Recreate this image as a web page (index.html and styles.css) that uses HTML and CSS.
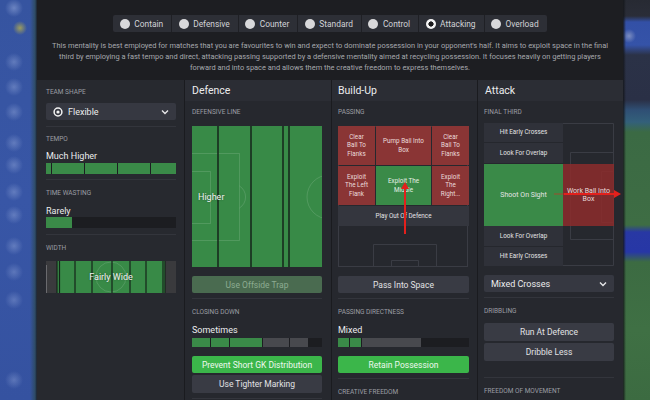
FILE: index.html
```html
<!DOCTYPE html>
<html lang="en">
<head>
<meta charset="utf-8">
<title>Tactics</title>
<link rel="stylesheet" href="styles.css">
</head>
<body>
<div class="screen">
  <div class="bg-left"></div>
  <main class="panel">
    <header class="top">
      <div class="mentality">
        <div class="ment"><span class="radio"></span>Contain</div>
        <div class="ment"><span class="radio"></span>Defensive</div>
        <div class="ment"><span class="radio"></span>Counter</div>
        <div class="ment"><span class="radio"></span>Standard</div>
        <div class="ment"><span class="radio"></span>Control</div>
        <div class="ment"><span class="radio on"></span>Attacking</div>
        <div class="ment"><span class="radio"></span>Overload</div>
      </div>
      <p class="desc">This mentality is best employed for matches that you are favourites to win and expect to dominate possession in your opponent's half. It aims to exploit space in the final<br>third by employing a fast tempo and direct, attacking passing supported by a defensive mentality aimed at recycling possession. It focuses heavily on getting players<br>forward and into space and allows them the creative freedom to express themselves.</p>
    </header>

    <div class="cols">
      <section class="col col-side">
        <div class="lbl lbl-top">Team Shape</div>
        <div class="dd">
          <svg class="dd-icon" width="10" height="10" viewBox="0 0 10 10"><circle cx="5" cy="5" r="3.9" fill="none" stroke="#f2f2f2" stroke-width="1.5"/><circle cx="5" cy="5" r="1.6" fill="#f2f2f2"/></svg>
          <span>Flexible</span>
          <svg class="chev" width="8" height="6" viewBox="0 0 8 6"><path d="M1 1.5 L4 4.5 L7 1.5" fill="none" stroke="#e6e6e8" stroke-width="1.4"/></svg>
        </div>
        <div class="sep sep-a"></div>
        <div class="lbl lbl-sm">Tempo</div>
        <div class="val">Much Higher</div>
        <div class="bar bar-tall bar-tempo">
          <span class="seg" style="width:5px"></span>
          <span class="seg" style="width:32px"></span>
          <span class="seg" style="width:32px"></span>
          <span class="seg" style="width:32px"></span>
          <span class="seg" style="width:25px"></span>
        </div>
        <div class="sep"></div>
        <div class="lbl lbl-lg">Time Wasting</div>
        <div class="val">Rarely</div>
        <div class="bar bar-tall bar-tw">
          <span class="seg" style="width:26px"></span>
        </div>
        <div class="sep sep-b"></div>
        <div class="lbl">Width</div>
        <div class="stack width-pitch">
          <svg width="130" height="32" viewBox="0 0 130 32">
            <rect x="0" y="0" width="130" height="32" fill="#3a3a3d"/>
            <rect x="11" y="0" width="108" height="32" fill="#388a47"/>
            <circle cx="65" cy="16" r="15" fill="none" stroke="rgba(255,255,255,0.13)" stroke-width="1"/>
            <g stroke="#15231a" stroke-width="1.2">
              <line x1="11" y1="0" x2="11" y2="32"/>
              <line x1="13.5" y1="0" x2="13.5" y2="32"/>
              <line x1="29" y1="0" x2="29" y2="32"/>
              <line x1="46" y1="0" x2="46" y2="32"/>
              <line x1="66" y1="0" x2="66" y2="32"/>
              <line x1="84" y1="0" x2="84" y2="32"/>
              <line x1="100" y1="0" x2="100" y2="32"/>
              <line x1="117" y1="0" x2="117" y2="32"/>
              <line x1="119" y1="0" x2="119" y2="32"/>
            </g>
            <line x1="0.5" y1="4" x2="0.5" y2="32" stroke="#6a6a6e" stroke-width="1"/>
          </svg>
          <span class="pitch-text center">Fairly Wide</span>
        </div>
      </section>

      <section class="col col-def">
        <h2 class="col-head">Defence</h2>
        <div class="col-body">
          <div class="lbl lbl-head">Defensive Line</div>
          <div class="stack def-pitch">
            <svg width="130" height="141" viewBox="0 0 130 141">
              <rect x="0" y="0" width="130" height="141" fill="#388a47"/>
              <g fill="none" stroke="rgba(255,255,255,0.13)" stroke-width="1">
                <path d="M0 27.5 H47.5 V114.5 H0"/>
                <path d="M0 45.5 H18.5 V97.5 H0"/>
                <path d="M47.5 60 A13 13 0 0 1 47.5 82"/>
                <circle cx="137" cy="71" r="22"/>
              </g>
              <g stroke="#15231a" stroke-width="1.5">
                <line x1="26" y1="0" x2="26" y2="141"/>
                <line x1="59" y1="0" x2="59" y2="141"/>
                <line x1="91" y1="0" x2="91" y2="141"/>
                <line x1="97" y1="0" x2="97" y2="141"/>
              </g>
            </svg>
            <span class="pitch-text left">Higher</span>
          </div>
          <div class="btn btn-off btn-gap">Use Offside Trap</div>
          <div class="sep"></div>
          <div class="lbl lbl-lg">Closing Down</div>
          <div class="val">Sometimes</div>
          <div class="bar">
            <span class="seg" style="width:18px"></span>
            <span class="seg" style="width:18px"></span>
            <span class="seg" style="width:32px"></span>
            <span class="seg seg-grey" style="width:26px"></span>
            <span class="seg seg-grey" style="width:18px"></span>
          </div>
          <div class="btn btn-green btn-gap">Prevent Short GK Distribution</div>
          <div class="btn btn-2">Use Tighter Marking</div>
          <div class="sep"></div>
        </div>
      </section>

      <section class="col col-build">
        <h2 class="col-head">Build-Up</h2>
        <div class="col-body">
          <div class="lbl lbl-head">Passing</div>
          <div class="stack build-pitch">
            <svg width="130" height="141" viewBox="0 0 130 141">
              <g fill="none" stroke="#3a3c44" stroke-width="1">
                <rect x="0.5" y="0.5" width="129" height="140"/>
                <path d="M35.5 141 V118.5 H98.5 V141"/>
                <path d="M53.5 141 V134.5 H80.5 V141"/>
              </g>
            </svg>
            <div class="pass-grid">
              <div class="cell red">Clear<br>Ball To<br>Flanks</div>
              <div class="cell red">Pump Ball Into<br>Box</div>
              <div class="cell red">Clear<br>Ball To<br>Flanks</div>
              <div class="cell red">Exploit<br>The Left<br>Flank</div>
              <div class="cell green">Exploit The<br>Middle</div>
              <div class="cell red">Exploit<br>The<br>Right...</div>
              <div class="cell grey wide">Play Out Of Defence</div>
            </div>
            <svg class="arrow" width="130" height="141" viewBox="0 0 130 141">
              <line x1="67" y1="108" x2="67" y2="62" stroke="#e3201c" stroke-width="2"/>
              <path d="M63 63 L67 56 L71 63 Z" fill="#e3201c"/>
            </svg>
          </div>
          <div class="btn btn-gap">Pass Into Space</div>
          <div class="sep"></div>
          <div class="lbl lbl-lg">Passing Directness</div>
          <div class="val">Mixed</div>
          <div class="bar">
            <span class="seg" style="width:11px"></span>
            <span class="seg" style="width:11px"></span>
            <span class="seg seg-grey" style="width:59px"></span>
          </div>
          <div class="btn btn-green btn-gap">Retain Possession</div>
          <div class="sep sep-c"></div>
          <div class="lbl lbl-lg">Creative Freedom</div>
        </div>
      </section>

      <section class="col col-att">
        <h2 class="col-head">Attack</h2>
        <div class="col-body">
          <div class="lbl lbl-head">Final Third</div>
          <div class="stack att-pitch">
            <svg width="130" height="143" viewBox="0 0 130 143">
              <g fill="none" stroke="#3a3c44" stroke-width="1">
                <path d="M79 0.5 H129.5 V142.5 H79"/>
                <path d="M130 29.5 H86.5 V116.5 H130"/>
                <path d="M130 48.5 H117.5 V99.5 H130"/>
              </g>
            </svg>
            <div class="att-grid">
              <div class="acell">Hit Early Crosses</div>
              <div class="acell">Look For Overlap</div>
              <div class="acell a-green">Shoot On Sight</div>
              <div class="acell a-red">Work Ball Into<br>Box</div>
              <div class="acell">Look For Overlap</div>
              <div class="acell">Hit Early Crosses</div>
            </div>
            <svg class="arrow" width="130" height="143" viewBox="0 0 130 143">
              <line x1="70" y1="71" x2="80" y2="71" stroke="#e3201c" stroke-width="1" opacity="0.6"/>
              <line x1="80" y1="71" x2="131" y2="71" stroke="#e3201c" stroke-width="2"/>
              <path d="M130 67 L137 71 L130 75 Z" fill="#e3201c"/>
            </svg>
          </div>
          <div class="dd dd-gap">
            <span>Mixed Crosses</span>
            <svg class="chev" width="8" height="6" viewBox="0 0 8 6"><path d="M1 1.5 L4 4.5 L7 1.5" fill="none" stroke="#e6e6e8" stroke-width="1.4"/></svg>
          </div>
          <div class="sep"></div>
          <div class="lbl">Dribbling</div>
          <div class="btn btn-tall">Run At Defence</div>
          <div class="btn btn-tall btn-2">Dribble Less</div>
          <div class="sep sep-d"></div>
          <div class="lbl lbl-lg">Freedom Of Movement</div>
        </div>
      </section>
    </div>
  </main>
  <div class="bg-right"></div>
</div>
</body>
</html>
```

FILE: styles.css
```css
* { box-sizing: border-box; margin: 0; padding: 0; }

html, body {
  width: 650px;
  height: 400px;
  overflow: hidden;
  background: #1d1e22;
}

body {
  font-family: Roboto, "Liberation Sans", sans-serif;
  color: #e6e6e8;
}

.screen {
  display: flex;
  width: 650px;
  height: 400px;
}

.bg-left {
  width: 37px;
  flex: none;
  background:
    linear-gradient(90deg, rgba(0,0,0,0) 0, rgba(0,0,0,0) 30px, rgba(40,70,55,0.55) 35px, rgba(25,30,35,0.9) 37px),
    radial-gradient(circle at 20px 28px, rgba(190,180,70,0.75) 0, rgba(190,180,70,0) 7px),
    radial-gradient(circle at 14px 8px, rgba(150,170,220,0.55) 0, rgba(150,170,220,0) 9px),
    radial-gradient(circle at 14px 62px, rgba(150,170,220,0.45) 0, rgba(150,170,220,0) 9px),
    radial-gradient(circle at 14px 87px, rgba(150,170,220,0.45) 0, rgba(150,170,220,0) 9px),
    radial-gradient(circle at 14px 112px, rgba(150,170,220,0.45) 0, rgba(150,170,220,0) 9px),
    radial-gradient(circle at 14px 143px, rgba(150,170,220,0.45) 0, rgba(150,170,220,0) 9px),
    radial-gradient(circle at 14px 165px, rgba(150,170,220,0.45) 0, rgba(150,170,220,0) 9px),
    radial-gradient(circle at 14px 192px, rgba(150,170,220,0.45) 0, rgba(150,170,220,0) 9px),
    radial-gradient(circle at 14px 215px, rgba(150,170,220,0.45) 0, rgba(150,170,220,0) 9px),
    radial-gradient(circle at 14px 246px, rgba(150,170,220,0.45) 0, rgba(150,170,220,0) 9px),
    radial-gradient(circle at 14px 272px, rgba(150,170,220,0.4) 0, rgba(150,170,220,0) 9px),
    radial-gradient(circle at 14px 300px, rgba(150,170,220,0.4) 0, rgba(150,170,220,0) 9px),
    radial-gradient(circle at 14px 380px, rgba(150,170,220,0.4) 0, rgba(150,170,220,0) 9px),
    linear-gradient(180deg, #3654a0 0, #3856a6 50%, #3552a0 100%);
}

.bg-right {
  flex: 1;
  background:
    linear-gradient(90deg, rgba(20,22,26,0.9) 0, rgba(20,22,26,0) 3px),
    radial-gradient(circle at 6px 36px, rgba(170,180,210,0.6) 0, rgba(170,180,210,0) 7px),
    linear-gradient(180deg,
      #272a33 0, #2a2d38 16px,
      #3350a6 22px, #3553a8 45px,
      #2b3247 55px, #2a3046 100px,
      #2f4f74 110px, #33607a 122px,
      #3b6a44 132px, #3e6d44 225px,
      #2838a4 232px, #2737a6 252px,
      #3c6b42 262px, #3f7044 330px, #3c6b41 400px);
}

.panel {
  width: 586px;
  height: 400px;
  flex: none;
  background: #1d1e22;
  display: flex;
  flex-direction: column;
  overflow: hidden;
}

/* ---------- top ---------- */
.top {
  height: 80px;
  flex: none;
  padding-top: 15px;
  display: flex;
  flex-direction: column;
  align-items: center;
}

.mentality {
  display: flex;
  height: 17px;
  background: #2d2f36;
  border-radius: 2px;
}

.ment {
  display: flex;
  align-items: center;
  gap: 4.5px;
  padding: 0 8px 0 6.5px;
  font-size: 8.4px;
  color: #d2d3d6;
  border-left: 1px solid #1f2025;
}

.ment:first-child { border-left: 0; }

.radio {
  width: 10px;
  height: 10px;
  border-radius: 50%;
  background: #d8d8da;
  flex: none;
}

.radio.on {
  background: radial-gradient(circle, #1b1b1d 0, #1b1b1d 2.3px, #f4f4f4 2.9px);
}

.desc {
  margin-top: 8px;
  font-size: 7.45px;
  line-height: 11px;
  color: #a6a8ad;
  text-align: center;
  white-space: nowrap;
}

/* ---------- columns ---------- */
.cols {
  flex: 1;
  min-height: 0;
  display: flex;
  gap: 1px;
  background: #1a1b1f;
  overflow: hidden;
}

.col {
  background: #26282e;
  display: flex;
  flex-direction: column;
}

.col-side {
  width: 147px;
  padding: 0 8px 0 9px;
  background: #27292f;
}

.col-def { width: 146px; }
.col-build { width: 145px; }
.col-att { width: 145px; }

.col-head {
  height: 21px;
  flex: none;
  background: #2b2d34;
  font-size: 10.5px;
  font-weight: 400;
  padding-left: 7px;
  display: flex;
  align-items: center;
  color: #ececee;
}

.col-build .col-head { padding-left: 6px; }

.col-body {
  padding: 0 9px 0 7px;
  display: flex;
  flex-direction: column;
}

.col-build .col-body { padding: 0 8px 0 6px; }
.col-att .col-body { padding: 0 9px 0 6px; }

/* ---------- labels / values ---------- */
.lbl {
  height: 25px;
  flex: none;
  display: flex;
  align-items: center;
  font-size: 6.5px;
  color: #9b9da3;
  text-transform: uppercase;
}

.lbl-top { height: 23px; }
.lbl-sm { height: 24px; }
.lbl-lg { height: 26px; }
.lbl-head { height: 22px; }

.val {
  height: 10px;
  flex: none;
  font-size: 9px;
  line-height: 10px;
  color: #ececee;
}

.sep {
  height: 1px;
  flex: none;
  background: #33353c;
  margin-top: 5px;
}

.sep-a { margin-top: 6px; }
.sep-b { margin-top: 6px; }
.sep-c { margin-top: 5px; }
.sep-d { margin-top: 16px; }

/* ---------- bars ---------- */
.bar {
  display: flex;
  flex: none;
  gap: 1px;
  height: 9px;
  margin-top: 3px;
  background: #1c1d21;
}

.bar-tall { height: 11px; }
.bar-tempo { margin-top: 2px; background: #3a8a48; }
.bar-tw { margin-top: 1px; }

.seg {
  background: #3a8a48;
  flex: none;
}

.bar-tempo .seg { box-shadow: 1px 0 0 #1c1d21; }
.bar-tempo .seg:last-child { box-shadow: none; }

.seg-grey { background: #48494e; }

/* ---------- buttons / dropdowns ---------- */
.btn {
  height: 17px;
  flex: none;
  border-radius: 2px;
  background: #393b44;
  font-size: 8.5px;
  display: flex;
  align-items: center;
  justify-content: center;
  color: #e2e2e5;
}

.btn-gap { margin-top: 9px; }
.btn-2 { margin-top: 2px; height: 18px; }
.btn-tall { height: 18px; }

.btn-green {
  background: #3bb64a;
  color: #eef8ee;
}

.btn-off {
  background: #4a6b50;
  color: #8dac92;
}

.dd {
  height: 17px;
  flex: none;
  border-radius: 2px;
  background: #363841;
  display: flex;
  align-items: center;
  gap: 5px;
  padding: 0 7px;
  font-size: 9px;
  color: #ececee;
}

.dd-gap { margin-top: 9px; }

.dd-icon { flex: none; }

.chev {
  margin-left: auto;
  flex: none;
}

/* ---------- pitches ---------- */
.stack {
  display: grid;
  flex: none;
}

.stack > * {
  grid-area: 1 / 1;
}

.stack svg { display: block; }

.width-pitch { margin-top: 1px; height: 32px; }
.def-pitch { margin-top: 3px; height: 141px; }
.build-pitch { margin-top: 3px; height: 141px; }
.att-pitch { margin-top: 0; height: 143px; }

.arrow { overflow: visible; }

.pitch-text {
  align-self: center;
  font-size: 9px;
  color: #f2f2f2;
  text-shadow: 0 0 2px rgba(0,0,0,0.4);
}

.pitch-text.center { justify-self: center; }
.pitch-text.left { justify-self: start; margin-left: 6px; }

.pass-grid {
  align-self: start;
  display: grid;
  grid-template-columns: 37px 55px 37px;
  grid-template-rows: 39px 39px 20px;
  gap: 1px;
  width: 130px;
}

.cell {
  display: flex;
  align-items: center;
  justify-content: center;
  text-align: center;
  font-size: 6.3px;
  line-height: 8.3px;
  color: #eadcdc;
}

.cell.red { background: #8a3535; }
.cell.green { background: #3a8a48; color: #e6f0e6; }
.cell.grey { background: #34363e; color: #e4e4e6; }
.cell.wide { grid-column: 1 / 4; }

.att-grid {
  align-self: start;
  display: grid;
  grid-template-columns: 79px 51px;
  grid-template-rows: 20px 21px 62px 21px 19px;
  width: 130px;
}

.acell {
  grid-column: 1;
  background: #2f3139;
  border-bottom: 1px solid #25272d;
  display: flex;
  align-items: center;
  justify-content: center;
  text-align: center;
  font-size: 6.3px;
  line-height: 8.5px;
  color: #e4e4e6;
}

.acell:last-child { border-bottom: 0; }

.acell.a-green {
  background: #3a8a48;
  font-size: 7px;
  border-bottom: 0;
}

.acell.a-red {
  grid-column: 2;
  grid-row: 3;
  background: rgba(140, 44, 44, 0.86);
  font-size: 7px;
  color: #ecdcdc;
  border-bottom: 0;
}
```
